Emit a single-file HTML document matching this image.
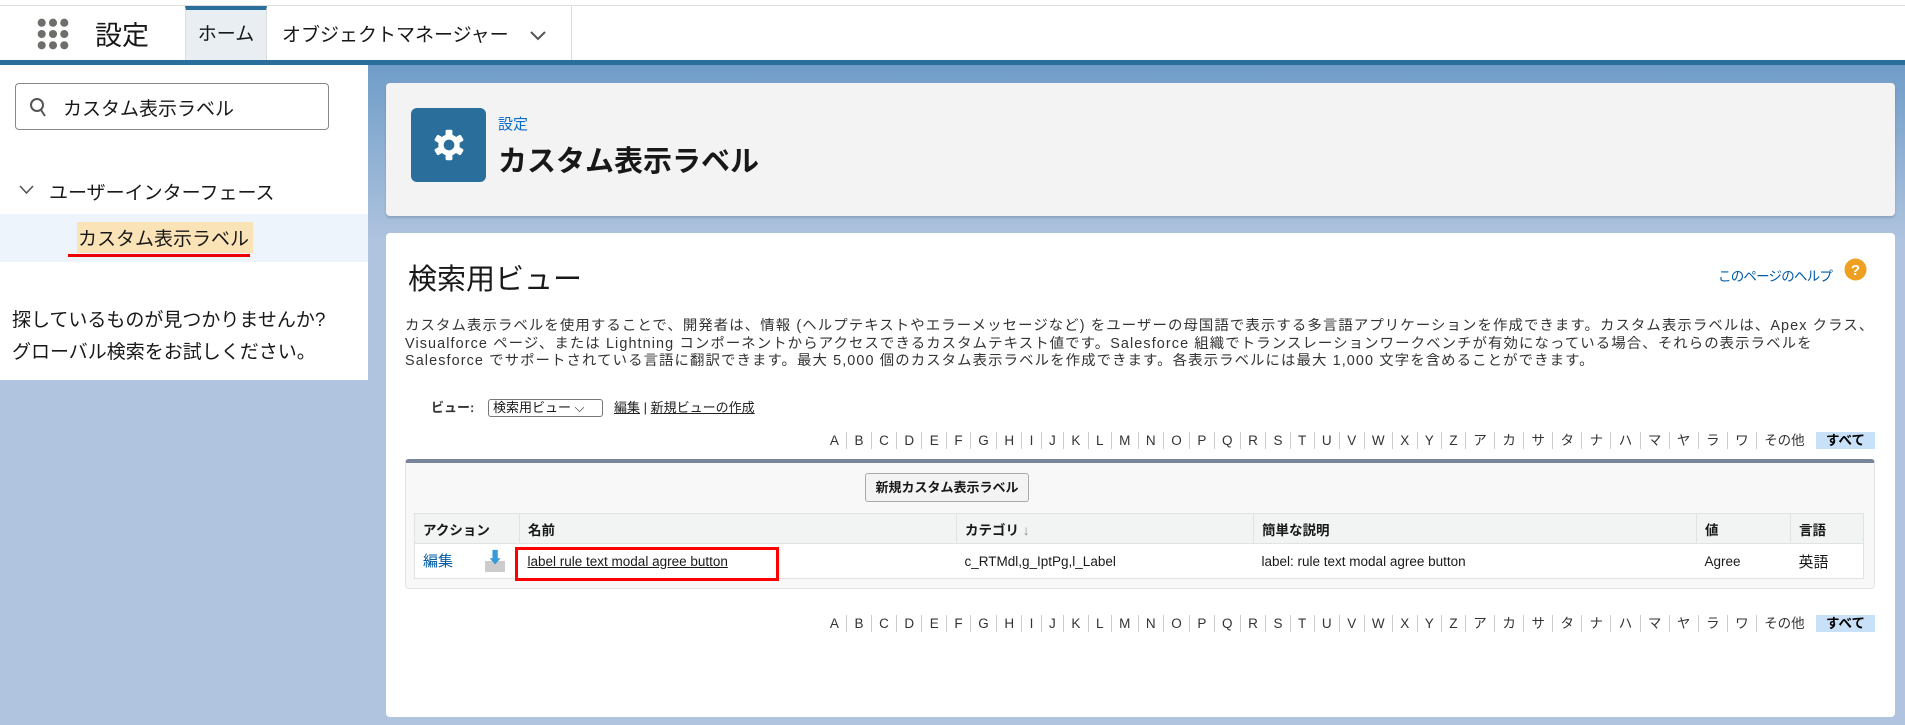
<!DOCTYPE html>
<html><head><meta charset="utf-8"><style>
*{margin:0;padding:0;box-sizing:border-box}
body{width:1905px;height:725px;overflow:hidden;position:relative;background:#b0c4df;font-family:"Liberation Sans","Noto Sans CJK JP",sans-serif;color:#181818}
.abs{position:absolute}
.alpha{position:absolute;right:30px;font-size:13.5px;color:#333;white-space:nowrap;display:flex;align-items:center;height:17px}
.alpha span{padding:0 7.3px;border-left:1px solid #ccc;line-height:17px}
.alpha span:first-child{border-left:none}
.alpha span.all{background:#c9e1f8;color:#000;font-weight:bold;border-left:none;margin-left:4px;padding:0 10px}
th,td{text-align:left;font-size:13.5px;border-bottom:1px solid #e0e3e5}
th{background:#f2f3f3;height:30px;font-weight:bold;padding-left:8px;border-right:1px solid #e0e3e5}
td{height:35px;padding-left:8px}
</style></head><body>
<div class="abs" style="left:0;top:0;width:1905px;height:6px;background:#fff;border-bottom:1px solid #ddd"></div>
<div class="abs" style="left:0;top:6px;width:1905px;height:54px;background:#fff"></div>
<div class="abs" style="left:0;top:60px;width:1905px;height:5px;background:#2a6f9b"></div>
<svg class="abs" style="left:37px;top:18px" width="32" height="32" viewBox="0 0 34 34" fill="#706e6b"><circle cx="5" cy="5" r="4.3"/><circle cx="17" cy="5" r="4.3"/><circle cx="29" cy="5" r="4.3"/><circle cx="5" cy="17" r="4.3"/><circle cx="17" cy="17" r="4.3"/><circle cx="29" cy="17" r="4.3"/><circle cx="5" cy="29" r="4.3"/><circle cx="17" cy="29" r="4.3"/><circle cx="29" cy="29" r="4.3"/></svg>
<div class="abs" style="left:95px;top:14px;font-size:27px;">設定</div>
<div class="abs" style="left:185px;top:6px;width:82px;height:54px;background:#e9eef2;border-top:4px solid #2a6f9b;border-right:1px solid #ddd;border-left:1px solid #ddd;font-size:19px;text-align:center;line-height:50px">ホーム</div>
<div class="abs" style="left:282px;top:20px;font-size:19px">オブジェクトマネージャー</div>
<svg class="abs" style="left:529px;top:30px" width="18" height="12" viewBox="0 0 18 12"><path d="M2 2 L9 9 L16 2" stroke="#555" stroke-width="2" fill="none"/></svg>
<div class="abs" style="left:571px;top:6px;width:1px;height:54px;background:#ddd"></div>
<div class="abs" style="left:0;top:65px;width:368px;height:315px;background:#fff"></div>
<div class="abs" style="left:15px;top:83px;width:314px;height:47px;border:1px solid #888;border-radius:4px"></div>
<svg class="abs" style="left:29px;top:97px" width="18" height="22" viewBox="0 0 18 22"><circle cx="8" cy="8" r="6" stroke="#555" stroke-width="2" fill="none"/><path d="M12 13 L16 19" stroke="#555" stroke-width="2"/></svg>
<div class="abs" style="left:63px;top:94px;font-size:19px">カスタム表示ラベル</div>
<svg class="abs" style="left:19px;top:185px" width="15" height="10" viewBox="0 0 15 10"><path d="M1 1 L7.5 8 L14 1" stroke="#555" stroke-width="1.6" fill="none"/></svg>
<div class="abs" style="left:49px;top:178px;font-size:19px">ユーザーインターフェース</div>
<div class="abs" style="left:0;top:214px;width:368px;height:48px;background:#eef4fc"></div>
<div class="abs" style="left:77px;top:222px;width:176px;height:31px;background:#fbe3b8"></div>
<div class="abs" style="left:78px;top:224px;font-size:19px">カスタム表示ラベル</div>
<div class="abs" style="left:68px;top:254px;width:182px;height:3px;background:#e00"></div>
<div class="abs" style="left:12px;top:305px;font-size:19px;line-height:32px">探しているものが見つかりませんか?<br>グローバル検索をお試しください。</div>
<div class="abs" style="left:368px;top:65px;width:1537px;height:180px;background:linear-gradient(#6f9dc8,#b0c4df)"></div>
<div class="abs" style="left:386px;top:83px;width:1509px;height:133px;background:#f3f3f3;border-radius:4px;box-shadow:0 2px 2px rgba(0,0,0,.15)"></div>
<div class="abs" style="left:411px;top:108px;width:75px;height:74px;background:#2a6f9b;border-radius:6px"></div>
<svg class="abs" style="left:433px;top:129px" width="32" height="32" viewBox="0 0 42 42"><g fill="#fff" transform="translate(21 21)"><circle r="14"/><rect x="-4.5" y="-20" width="9" height="10" rx="2"/><rect x="-4.5" y="-20" width="9" height="10" rx="2" transform="rotate(60)"/><rect x="-4.5" y="-20" width="9" height="10" rx="2" transform="rotate(120)"/><rect x="-4.5" y="-20" width="9" height="10" rx="2" transform="rotate(180)"/><rect x="-4.5" y="-20" width="9" height="10" rx="2" transform="rotate(240)"/><rect x="-4.5" y="-20" width="9" height="10" rx="2" transform="rotate(300)"/><circle r="7" fill="#2a6f9b"/></g></svg>
<div class="abs" style="left:498px;top:113px;font-size:15px;color:#0b6bcb">設定</div>
<div class="abs" style="left:498px;top:138px;font-size:29px;font-weight:bold">カスタム表示ラベル</div>
<div class="abs" style="left:386px;top:233px;width:1509px;height:484px;background:#fff;border-radius:4px"></div>
<div class="abs" style="left:408px;top:256px;font-size:29px">検索用ビュー</div>
<div class="abs" style="left:1718px;top:265px;font-size:13.5px;color:#015ba7;letter-spacing:-0.8px">このページのヘルプ</div>
<svg class="abs" style="left:1844px;top:258px" width="23" height="23" viewBox="0 0 23 23"><circle cx="11.5" cy="11.5" r="11" fill="#f0a020"/><text x="11.5" y="17" font-size="15" font-weight="bold" fill="#fff" text-anchor="middle" font-family="Liberation Sans">?</text></svg>
<div class="abs" style="left:405px;top:318px;width:1480px;font-size:14.4px;line-height:17.5px;color:#333;letter-spacing:1.1px">カスタム表示ラベルを使用することで、開発者は、情報 (ヘルプテキストやエラーメッセージなど) をユーザーの母国語で表示する多言語アプリケーションを作成できます。カスタム表示ラベルは、Apex クラス、Visualforce ページ、または Lightning コンポーネントからアクセスできるカスタムテキスト値です。Salesforce 組織でトランスレーションワークベンチが有効になっている場合、それらの表示ラベルを Salesforce でサポートされている言語に翻訳できます。最大 5,000 個のカスタム表示ラベルを作成できます。各表示ラベルには最大 1,000 文字を含めることができます。</div>
<div class="abs" style="left:431px;top:397px;font-size:13px;font-weight:bold;color:#333">ビュー:</div>
<div class="abs" style="left:488px;top:399px;width:115px;height:18px;border:1px solid #777;border-radius:3px;font-size:13px;padding-left:4px;line-height:16px">検索用ビュー ⌵</div>
<div class="abs" style="left:614px;top:397px;font-size:13px;color:#222"><u>編集</u> | <u>新規ビューの作成</u></div>
<div class="alpha" style="top:432px"><span>A</span><span>B</span><span>C</span><span>D</span><span>E</span><span>F</span><span>G</span><span>H</span><span>I</span><span>J</span><span>K</span><span>L</span><span>M</span><span>N</span><span>O</span><span>P</span><span>Q</span><span>R</span><span>S</span><span>T</span><span>U</span><span>V</span><span>W</span><span>X</span><span>Y</span><span>Z</span><span>ア</span><span>カ</span><span>サ</span><span>タ</span><span>ナ</span><span>ハ</span><span>マ</span><span>ヤ</span><span>ラ</span><span>ワ</span><span>その他</span><span class="all">すべて</span></div>
<div class="abs" style="left:405px;top:459px;width:1470px;height:130px;background:#f8f8f8;border:1px solid #e0e3e5;border-top:4px solid #7a859a;border-radius:4px"></div>
<div class="abs" style="left:865px;top:473px;width:164px;height:29px;background:#f3f3f3;border:1px solid #aaa;border-radius:3px;font-size:13px;font-weight:bold;text-align:center;line-height:27px">新規カスタム表示ラベル</div>
<table class="abs" style="left:414px;top:513px;width:1450px;border-collapse:collapse;background:#fff;border:1px solid #e0e3e5">
<tr><th style="width:105px">アクション</th><th style="width:437px">名前</th><th style="width:297px">カテゴリ <span style="color:#888">↓</span></th><th style="width:443px">簡単な説明</th><th style="width:94px">値</th><th>言語</th></tr>
<tr><td style="color:#015ba7;font-size:15px">編集 <span style="display:inline-block;margin-left:28px;width:20px;height:20px;background:linear-gradient(#fff 45%,#ccc 45%);vertical-align:middle;color:#3a9ad9;font-size:16px;line-height:14px;text-align:center">⬇</span></td><td><u>label rule text modal agree button</u></td><td>c_RTMdl,g_IptPg,l_Label</td><td>label: rule text modal agree button</td><td>Agree</td><td style="font-size:15px">英語</td></tr>
</table>
<div class="abs" style="left:515px;top:547px;width:264px;height:34px;border:3px solid #f00"></div>
<div class="alpha" style="top:615px"><span>A</span><span>B</span><span>C</span><span>D</span><span>E</span><span>F</span><span>G</span><span>H</span><span>I</span><span>J</span><span>K</span><span>L</span><span>M</span><span>N</span><span>O</span><span>P</span><span>Q</span><span>R</span><span>S</span><span>T</span><span>U</span><span>V</span><span>W</span><span>X</span><span>Y</span><span>Z</span><span>ア</span><span>カ</span><span>サ</span><span>タ</span><span>ナ</span><span>ハ</span><span>マ</span><span>ヤ</span><span>ラ</span><span>ワ</span><span>その他</span><span class="all">すべて</span></div>
</body></html>
